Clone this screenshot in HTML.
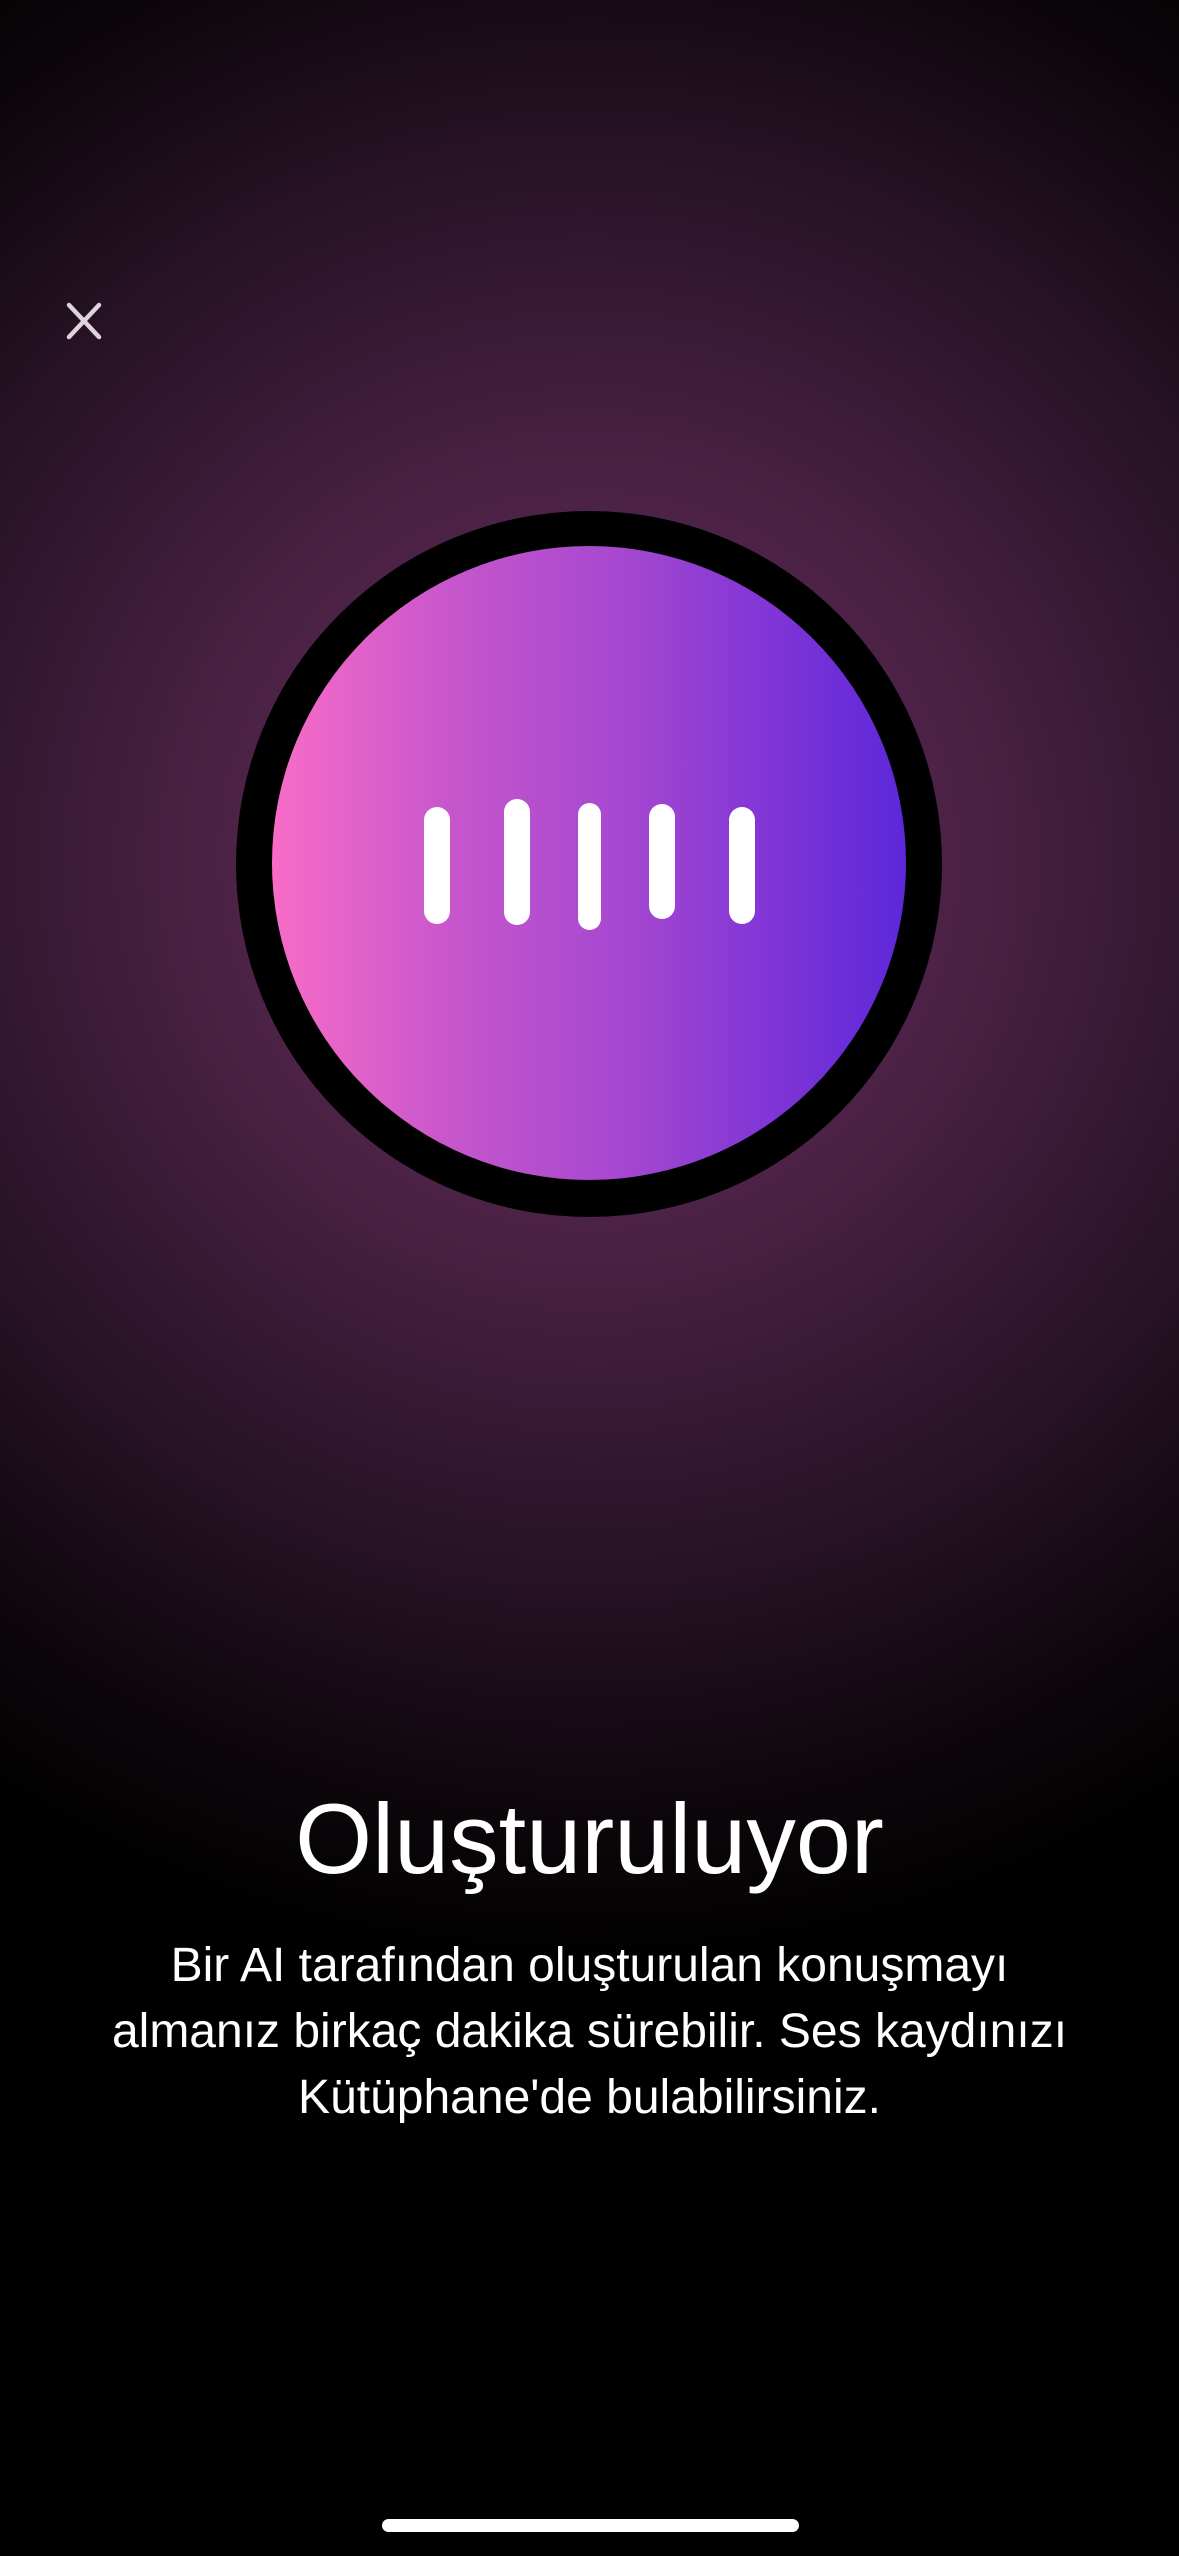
<!DOCTYPE html>
<html><head><meta charset="utf-8">
<style>
html,body{margin:0;padding:0;}
body{width:1179px;height:2556px;position:relative;overflow:hidden;background:#000;
font-family:"Liberation Sans",Arial,sans-serif;color:#fff;}
.bg{position:absolute;inset:0;background:radial-gradient(circle at 589px 860px,#5c2b57 0,#4c2347 360px,#3a1a36 540px,#22101f 760px,#0c060b 960px,#000 1120px);}
.ring{position:absolute;left:236px;top:511px;width:706px;height:706px;border-radius:50%;background:#000;}
.disc{position:absolute;left:272px;top:546px;width:634px;height:634px;border-radius:50%;
background:linear-gradient(90deg,#f86cc7 0%,#c455cc 30%,#a648d0 55%,#7e34d6 80%,#5b28d9 100%);}
.bar{position:absolute;width:26px;background:#fff;border-radius:13px;}
.t{position:absolute;left:0;width:1179px;text-align:center;}
</style></head><body>
<div class="bg"></div>
<svg style="position:absolute;left:62px;top:300px" width="44" height="44" viewBox="0 0 44 44">
<path d="M7 5 L37 37 M37 5 L7 37" stroke="#dcd6dc" stroke-width="4.5" stroke-linecap="round"/>
</svg>
<div class="ring"></div>
<div class="disc"></div>
<div class="bar" style="left:424px;top:807px;height:117px"></div>
<div class="bar" style="left:504px;top:799px;height:126px"></div>
<div class="bar" style="left:578px;top:803px;height:127px;width:23px"></div>
<div class="bar" style="left:649px;top:804px;height:115px"></div>
<div class="bar" style="left:729px;top:807px;height:117px"></div>
<div class="t" style="top:1779px;font-size:99px;line-height:120px;">Oluşturuluyor</div>
<div class="t" style="top:1933px;font-size:48px;line-height:66px;">Bir AI tarafından oluşturulan konuşmayı<br>almanız birkaç dakika sürebilir. Ses kaydınızı<br>Kütüphane'de bulabilirsiniz.</div>
<div style="position:absolute;left:382px;top:2519px;width:417px;height:13px;border-radius:7px;background:#fff"></div>
</body></html>
